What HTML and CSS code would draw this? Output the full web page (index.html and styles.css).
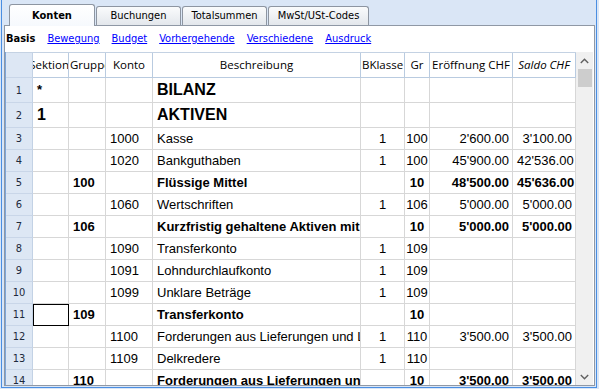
FILE: index.html
```html
<!DOCTYPE html>
<html lang="de">
<head>
  <meta charset="UTF-8"/>
  <title>Konten</title>
  <link rel="stylesheet" href="styles.css">
</head>
<body>
  <div class="frame">

    <!-- Tabs -->
    <div class="tabs">
      <div class="tab active">Konten</div>
      <div class="tab">Buchungen</div>
      <div class="tab">Totalsummen</div>
      <div class="tab wide">MwSt/USt-Codes</div>
    </div>

    <div class="panel">
      <!-- Views -->
      <div class="views">
        <span class="view current">Basis</span>
        <a class="view" href="#">Bewegung</a>
        <a class="view" href="#">Budget</a>
        <a class="view" href="#">Vorhergehende</a>
        <a class="view" href="#">Verschiedene</a>
        <a class="view" href="#">Ausdruck</a>
      </div>

      <!-- Grid -->
      <div class="grid">
        <table class="sheet">
          <colgroup>
            <col style="width:27px"><col style="width:36px"><col style="width:37px"><col style="width:47px">
            <col style="width:208px"><col style="width:44px"><col style="width:25px"><col style="width:83px"><col style="width:63px">
          </colgroup>
          <thead>
            <tr>
              <th class="num"></th>
              <th class="right">Sektion</th>
              <th class="left">Gruppe</th>
              <th>Konto</th>
              <th>Beschreibung</th>
              <th>BKlasse</th>
              <th>Gr</th>
              <th>Eröffnung CHF</th>
              <th class="italic">Saldo CHF</th>
            </tr>
          </thead>
          <tbody>
            <tr class="big">
              <td class="num">1</td><td class="star">*</td><td></td><td></td>
              <td class="b">BILANZ</td><td></td><td></td><td></td><td></td>
            </tr>
            <tr class="big">
              <td class="num">2</td><td class="b">1</td><td></td><td></td>
              <td class="b">AKTIVEN</td><td></td><td></td><td></td><td></td>
            </tr>
            <tr>
              <td class="num">3</td><td></td><td></td><td>1000</td>
              <td>Kasse</td><td class="c">1</td><td class="c">100</td><td class="r">2'600.00</td><td class="r">3'100.00</td>
            </tr>
            <tr>
              <td class="num">4</td><td></td><td></td><td>1020</td>
              <td>Bankguthaben</td><td class="c">1</td><td class="c">100</td><td class="r">45'900.00</td><td class="r">42'536.00</td>
            </tr>
            <tr class="total">
              <td class="num">5</td><td></td><td>100</td><td></td>
              <td>Flüssige Mittel</td><td></td><td class="c">10</td><td class="r">48'500.00</td><td class="r">45'636.00</td>
            </tr>
            <tr>
              <td class="num">6</td><td></td><td></td><td>1060</td>
              <td>Wertschriften</td><td class="c">1</td><td class="c">106</td><td class="r">5'000.00</td><td class="r">5'000.00</td>
            </tr>
            <tr class="total">
              <td class="num">7</td><td></td><td>106</td><td></td>
              <td>Kurzfristig gehaltene Aktiven mit Börsenkurs</td><td></td><td class="c">10</td><td class="r">5'000.00</td><td class="r">5'000.00</td>
            </tr>
            <tr>
              <td class="num">8</td><td></td><td></td><td>1090</td>
              <td>Transferkonto</td><td class="c">1</td><td class="c">109</td><td></td><td></td>
            </tr>
            <tr>
              <td class="num">9</td><td></td><td></td><td>1091</td>
              <td>Lohndurchlaufkonto</td><td class="c">1</td><td class="c">109</td><td></td><td></td>
            </tr>
            <tr>
              <td class="num">10</td><td></td><td></td><td>1099</td>
              <td>Unklare Beträge</td><td class="c">1</td><td class="c">109</td><td></td><td></td>
            </tr>
            <tr class="total">
              <td class="num">11</td><td class="cursor"></td><td>109</td><td></td>
              <td>Transferkonto</td><td></td><td class="c">10</td><td></td><td></td>
            </tr>
            <tr>
              <td class="num">12</td><td></td><td></td><td>1100</td>
              <td>Forderungen aus Lieferungen und Leistungen</td><td class="c">1</td><td class="c">110</td><td class="r">3'500.00</td><td class="r">3'500.00</td>
            </tr>
            <tr>
              <td class="num">13</td><td></td><td></td><td>1109</td>
              <td>Delkredere</td><td class="c">1</td><td class="c">110</td><td></td><td></td>
            </tr>
            <tr class="total">
              <td class="num">14</td><td></td><td>110</td><td></td>
              <td>Forderungen aus Lieferungen und Leistungen</td><td></td><td class="c">10</td><td class="r">3'500.00</td><td class="r">3'500.00</td>
            </tr>
          </tbody>
        </table>

        <!-- Scrollbar -->
        <div class="scrollbar">
          <div class="arrow">
            <svg width="9" height="6" viewBox="0 0 9 6"><polyline points="0.8,5 4.5,1.3 8.2,5" fill="none" stroke="#606060" stroke-width="1.4"/></svg>
          </div>
          <div class="thumb"></div>
          <div class="track"></div>
          <div class="arrow">
            <svg width="9" height="6" viewBox="0 0 9 6"><polyline points="0.8,1 4.5,4.7 8.2,1" fill="none" stroke="#606060" stroke-width="1.4"/></svg>
          </div>
        </div>
      </div>
    </div>

  </div>
</body>
</html>
```

FILE: styles.css
```css
* {
  margin: 0; padding: 0;
  box-sizing: border-box;
}

body {
  width: 599px;
  height: 389px;
  overflow: hidden;
  background: #dae6f6;
  font-family: "DejaVu Sans Condensed", "DejaVu Sans", sans-serif;
  font-size: 11px;
  color: #000;
}

.frame {
  margin-left: 1px;
  width: 596px;
  height: 388px;
  border: 1px solid #4a8ee2;
  border-top: none;
  padding-left: 1px;
  display: flex;
  flex-direction: column;
}

/* tabs */
.tabs {
  height: 25px;
  flex-shrink: 0;
  display: flex;
  align-items: flex-end;
  padding-left: 6px;
}

.tab {
  width: 85px;
  height: 19px;
  margin-right: 1px;
  border: 1px solid #8d95a1;
  border-bottom: none;
  border-radius: 3px 3px 0 0;
  background: linear-gradient(#fafbfc, #e3e7ec);
  text-align: center;
  line-height: 18px;
  color: #000;
}

.tab.wide { width: 101px; }

.tab.active {
  width: 86px;
  height: 22px;
  margin-right: 1px;
  margin-bottom: -1px;
  position: relative;
  z-index: 1;
  background: linear-gradient(#ffffff, #f6f9fd);
  font-weight: bold;
  line-height: 22px;
}

/* panel */
.panel {
  margin-left: 1px;
  width: 591px;
  flex: 1;
  min-height: 0;
  margin-bottom: 1px;
  border: 1px solid #8f98a5;
  background: #fff;
  display: flex;
  flex-direction: column;
}

.views {
  height: 26px;
  flex-shrink: 0;
  display: flex;
  align-items: center;
  gap: 12px;
  padding: 0 0 1px 1px;
}

.view {
  color: #0000ff;
  text-decoration: underline;
}

.view.current {
  color: #000;
  font-weight: bold;
  text-decoration: none;
}

/* grid */
.grid {
  flex: 1;
  min-height: 0;
  display: flex;
  overflow: hidden;
  border-left: 1px solid #7ea6d9;
}

.sheet {
  width: 570px;
  flex-shrink: 0;
  table-layout: fixed;
  border-collapse: separate;
  border-spacing: 0;
  border-top: 1px solid #c4d2e3;
  align-self: flex-start;
  font-family: "Liberation Sans", Arial, sans-serif;
  font-size: 13px;
}

.sheet th {
  height: 25px;
  font-family: "Open Sans", sans-serif;
  font-size: 11.5px;
  font-weight: normal;
  text-align: center;
  white-space: nowrap;
  overflow: hidden;
  border-right: 1px solid #b9cbe0;
  border-bottom: 1px solid #b9cbe0;
  padding: 0 1px 1px;
  background: #fff;
}

.sheet th.left { text-align: left; }
.sheet th.right { direction: rtl; text-align: right; padding: 0 0 1px; }
.sheet th.italic { font-style: italic; }

.sheet td {
  height: 22px;
  padding: 0 3px 0 4px;
  white-space: nowrap;
  overflow: hidden;
  border-right: 1px solid #d7d7d7;
  border-bottom: 1px solid #d7d7d7;
}

.sheet .num {
  background: #dde7f4;
  border-right: 1px solid #c3d2e5;
  border-bottom: 1px solid #c9d6e8;
  font-family: "DejaVu Sans Condensed", sans-serif;
  font-size: 11px;
  color: #1d2a3c;
  text-align: center;
  padding: 0;
}

.sheet tr.big td { height: 25px; }
.sheet tr.big .b { font-size: 16px; font-weight: bold; }
.sheet .star { font-weight: bold; vertical-align: top; padding-top: 4px; }

.sheet tr.total td { font-weight: bold; }
.sheet tr.total .num { font-weight: normal; }

.sheet .c { text-align: center; padding: 0; }
.sheet .r { text-align: right; padding-right: 3px; }

.sheet td.cursor { outline: 1px solid #000; outline-offset: -1px; }

/* scrollbar */
.scrollbar {
  width: 17px;
  flex-shrink: 0;
  background: #f0f0f0;
  display: flex;
  flex-direction: column;
}

.arrow {
  height: 17px;
  display: flex;
  align-items: center;
  justify-content: center;
}

.thumb {
  height: 18px;
  margin: 0 1px 0 2px;
  background: #cdcdcd;
}

.track { flex: 1; }
```
